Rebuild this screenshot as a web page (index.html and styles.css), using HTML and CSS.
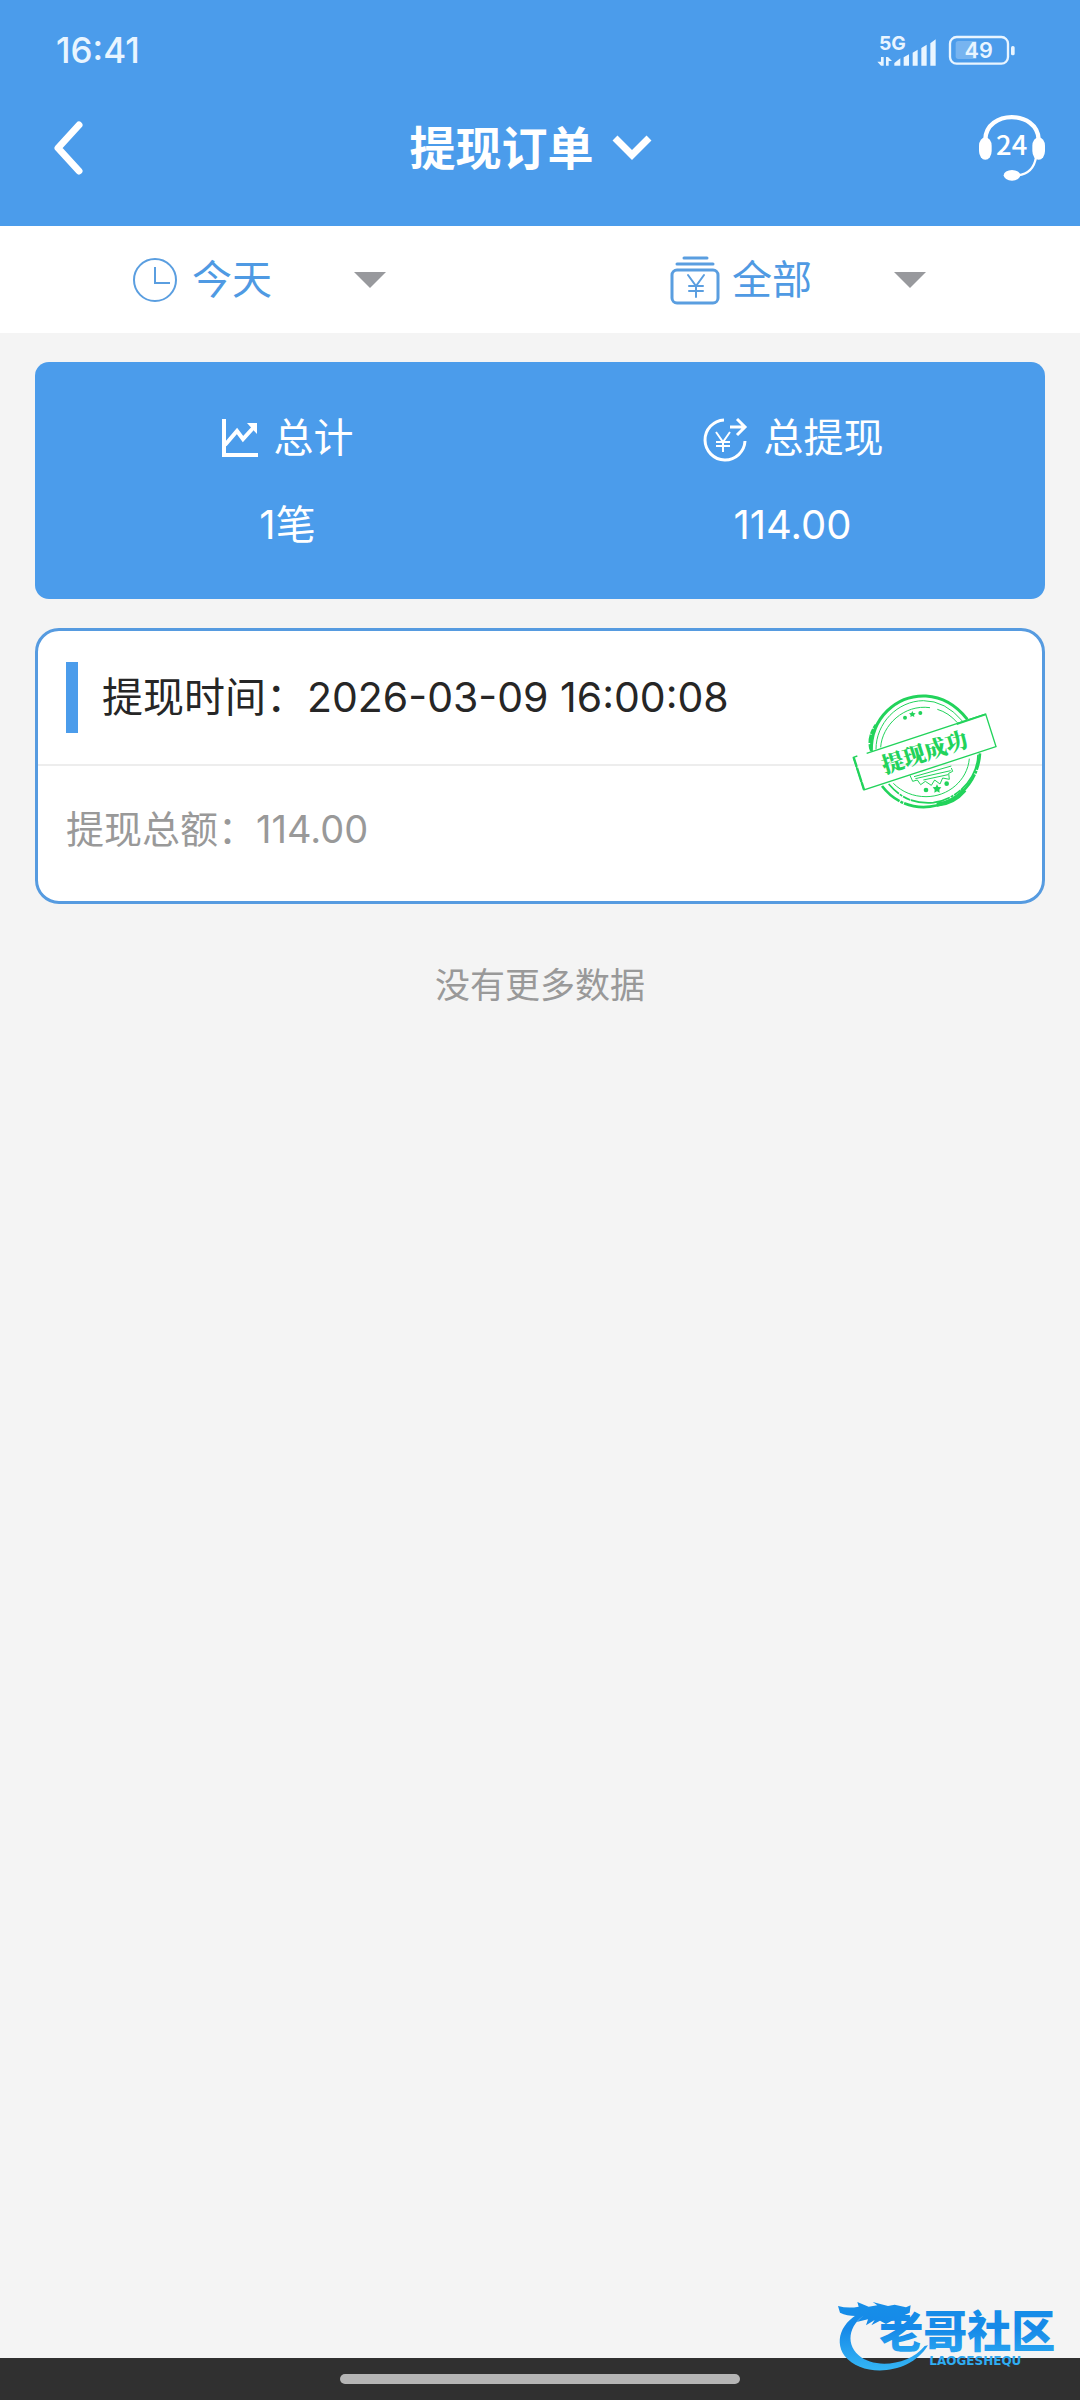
FILE: index.html
```html
<!DOCTYPE html>
<html lang="zh-CN">
<head>
<meta charset="utf-8">
<meta name="viewport" content="width=device-width, initial-scale=1">
<title>提现订单</title>
<link rel="stylesheet" href="styles.css">
</head>
<body>
<header class="header">
  <div class="status">
    <time class="status-time">16:41</time>
    <div class="status-icons">
      <svg class="signal" viewBox="50 17 186 135" aria-label="5G">
        <text x="59" y="83" font-size="58" font-weight="700">5G</text>
        <path d="M65 104h8v26h-8l-11-12h11zM80 130v-26h6l12 12h-10v14zM105 130v-8l18-14v22zM133 130v-25l16-9v34zM160 130V91l15-9v48zM186 130V77l16-10v63zM213 130V63l16-12v79z"/>
      </svg>
      <svg class="battery" viewBox="265 42 204 93" aria-label="电量 49">
        <rect x="271" y="48" width="174" height="80" rx="20" fill="none" stroke="#e9f5ff" stroke-width="7"/>
        <path d="M296 60h54v54h-54q-8 0-8-8V68q0-8 8-8z" opacity=".28"/>
        <rect x="454" y="75" width="11" height="28" rx="5"/>
        <text x="357" y="112" font-size="65" font-weight="600" text-anchor="middle">49</text>
      </svg>
    </div>
  </div>
  <div class="titlebar">
    <button class="icon-button back" type="button" aria-label="返回">
      <svg class="back-icon" viewBox="0 0 32 56"><path d="M28 5 7 28l21 23" fill="none" stroke="#fff" stroke-width="7" stroke-linecap="round" stroke-linejoin="round"/></svg>
    </button>
    <h1 class="title">
      <button class="title-button" type="button">提现订单
        <svg class="title-arrow" viewBox="0 0 40 30"><path d="m3 8 17 17L37 8" fill="none" stroke="#fff" stroke-width="7"/></svg>
      </button>
    </h1>
    <button class="icon-button" type="button" aria-label="客服">
      <svg class="service-icon" viewBox="355 280 204 204">
        <path d="M377 356C379 267 533 267 537 356" fill="none" stroke="#fff" stroke-width="13"/>
        <path d="M529 410q-8 48-54 54" fill="none" stroke="#fff" stroke-width="7"/>
        <rect x="358" y="350" width="38" height="67" rx="19" ry="26"/>
        <rect x="518" y="350" width="38" height="67" rx="19" ry="26"/>
        <ellipse cx="457" cy="464" rx="25" ry="16"/>
        <text x="456" y="403" font-size="82" font-weight="500" text-anchor="middle" class="service-text">24</text>
      </svg>
    </button>
  </div>
</header>

<form class="filters">
  <label class="filter">
    <svg class="filter-icon" viewBox="0 0 50 50"><g fill="none" stroke="#5a9ee0" stroke-width="2"><circle cx="25" cy="25" r="21"/><path d="M25 12v16h15"/></g></svg>
    <select class="filter-select" aria-label="时间"><option>今天</option></select>
    <svg class="filter-arrow" viewBox="0 0 32 16"><path d="M0 0h32L16 16z"/></svg>
  </label>
  <label class="filter">
    <svg class="filter-icon" viewBox="0 0 50 50"><g fill="none" stroke="#5a9ee0" stroke-width="3" stroke-linecap="round"><rect x="2" y="15" width="46" height="33" rx="5"/><path d="M7 9h36M14 3h23"/><path d="m18 20 8 11 8-11M26 31v11M19 31h14M19 36h14" stroke-width="2"/></g></svg>
    <select class="filter-select" aria-label="类型"><option>全部</option></select>
    <svg class="filter-arrow" viewBox="0 0 32 16"><path d="M0 0h32L16 16z"/></svg>
  </label>
</form>

<main class="content">
  <dl class="summary">
    <div class="summary-item">
      <dt class="summary-label">
        <svg class="chart-icon" viewBox="0 0 36 40"><path d="M2 1v36h34" fill="none" stroke="#fff" stroke-width="4"/><path d="m3 27 12-14 6 8 11-12" fill="none" stroke="#fff" stroke-width="4"/><path d="M25 5h10v11z" fill="#fff"/></svg>
        总计
      </dt>
      <dd class="summary-value">1笔</dd>
    </div>
    <div class="summary-item">
      <dt class="summary-label">
        <svg class="yen-icon" viewBox="0 0 46 48"><g fill="none" stroke="#fff" stroke-width="2"><path d="M22 6a20 20 0 1 0 21 21" stroke-width="3"/><path d="M28 13h15M35 5l8 8-8 8" stroke-width="3"/><path d="m14 18 7 10 7-10M21 28v10M14 28h14M14 32h14"/></g></svg>
        总提现
      </dt>
      <dd class="summary-value">114.00</dd>
    </div>
  </dl>

  <article class="order">
    <h2 class="order-head">提现时间：2026-03-09 16:00:08</h2>
    <p class="order-body">提现总额：114.00</p>
    <svg class="stamp" viewBox="0 0 510 420" aria-label="提现成功">
      <g fill="none" stroke="#22d35b">
        <path d="M94 214C92 114 170 44 258 48q72 4 124 70" stroke-width="9"/>
        <path d="M108 208C108 130 172 63 250 62q66 0 118 62" stroke-width="3"/>
        <path d="M92 208c-6-24-2-48 16-74" stroke-width="8" stroke-dasharray="16 3 26 2"/>
        <path d="M122 202c4-66 70-130 148-119M292 88q34 10 60 40" stroke-width="3"/>
        <path d="M126 318c38 50 92 68 144 62 80-10 144-72 150-160" stroke-width="8" stroke-dasharray="70 3 9 3 180 2"/>
        <path d="M414 224c-2 68-58 134-134 144-56 4-96-12-134-56" stroke-width="5" stroke-dasharray="120 2 24 3 9 3"/>
        <path d="M290 374q50-4 84-44" stroke-width="13"/>
        <path d="M388 236c-6 66-64 114-130 114-38 0-72-14-98-40" stroke-width="3"/>
        <path d="M52 228 40 232l32 98 396-130-31-98L80 220" stroke-width="4"/>
        <path d="m41 232 31 97" stroke-width="7" stroke-dasharray="30 3 44 2"/>
        <path d="m350 132 87-29" stroke-width="6"/>
        <path d="m210 286 8 18 14-4 10 14 14-10 18 12 10-16 16 12 8-18 20 4-2-18 12-6-4-10M222 290l112-32M226 296l106-24M250 300l74-16" stroke-width="3"/>
      </g>
      <g fill="#22d35b">
        <circle cx="195" cy="113" r="6"/><path d="m217 93 3 6 7 1-5 5 1 6-6-3-6 3 1-6-5-5 7-1z"/><circle cx="241" cy="99" r="6"/>
        <circle cx="258" cy="330" r="7"/><path d="m291 313 4 8 9 1-6 7 1 9-8-4-8 4 1-9-6-7 9-1z"/><circle cx="320" cy="311" r="7"/>
        <text class="stamp-text" x="254" y="241" font-size="67" text-anchor="middle" transform="rotate(-18 254 217)">提现成功</text>
      </g>
    </svg>
  </article>

  <p class="no-more">没有更多数据</p>
</main>

<footer class="gesture"><span class="gesture-bar"></span></footer>

<svg class="watermark" viewBox="0 0 780 360" aria-label="老哥社区">
  <defs>
    <linearGradient id="wm" x1="0" y1="60" x2="0" y2="275" gradientUnits="userSpaceOnUse"><stop offset="0" stop-color="#168fe8"/><stop offset=".4" stop-color="#1689e8"/><stop offset="1" stop-color="#35b7f5"/></linearGradient>
  </defs>
  <g fill="url(#wm)">
    <path d="M150 88C70 110 38 178 74 228c52 66 196 58 250-32l-10 2c-46 58-152 70-198 28C72 186 90 124 150 96z"/>
    <path d="M54 78q30 8 62 2l-4-14 34 14 26-4-14-10 46 12 20-4 34 8 14-6-3 22-27 12 27-1-9 15-36-6-26 14-18-10-26 14 10-16-26 16 6-18-34 8 20-20q-40 6-70-8z"/>
    <text class="watermark-name" x="178" y="204" font-size="132">老哥社区</text>
    <text class="watermark-sub" x="328" y="256" font-size="36">LAOGESHEQU</text>
  </g>
</svg>
</body>
</html>
```

FILE: styles.css
```css
* {
  box-sizing: border-box;
}

body {
  position: relative;
  display: flex;
  flex-direction: column;
  min-height: 100vh;
  margin: 0;
  background: #f4f4f4;
  color: #262626;
  font-family: Inter, "Noto Sans CJK SC", sans-serif;
  font-size: 40px;
}

h1, h2, p, dl, dt, dd {
  margin: 0;
  font-weight: 400;
}

button, select {
  padding: 0;
  border: 0;
  background: none;
  color: inherit;
  font: inherit;
}

svg {
  display: block;
  flex: none;
}

.header {
  padding-bottom: 30px;
  background: #4b9ceb;
  color: #fff;
}

.status {
  display: flex;
  align-items: center;
  justify-content: space-between;
  height: 100px;
  padding: 0 64px 0 56px;
  color: #e9f5ff;
}

.status-time {
  font-size: 35px;
  font-weight: 500;
}

.status-icons {
  display: flex;
  align-items: center;
  gap: 10px;
  fill: #e9f5ff;
}

.signal {
  width: 62px;
  height: 45px;
}

.battery {
  width: 68px;
  height: 31px;
}

.titlebar {
  display: grid;
  grid-template-columns: 48px 1fr 68px;
  align-items: center;
  height: 96px;
  padding: 0 34px 0 35px;
}

.icon-button {
  display: flex;
  align-items: center;
  height: 96px;
}

.back {
  justify-content: flex-end;
}

.back-icon {
  width: 32px;
  height: 56px;
}

.service-icon {
  width: 68px;
  height: 68px;
  fill: #fff;
}

.service-text {
  font-family: "Noto Sans CJK SC", sans-serif;
}

.title {
  display: flex;
  justify-content: center;
}

.title-button {
  display: flex;
  align-items: center;
  gap: 18px;
  padding-bottom: 6px;
  font-family: "Noto Sans CJK SC", sans-serif;
  font-size: 46px;
  font-weight: 700;
  line-height: 60px;
}

.title-arrow {
  width: 40px;
  height: 30px;
}

.filters {
  display: grid;
  grid-template-columns: 1fr 1fr;
  height: 107px;
  background: #fff;
}

.filter {
  display: flex;
  align-items: center;
  justify-content: center;
  padding-right: 24px;
  color: #4f9ae3;
}

.filter-icon {
  width: 50px;
  height: 50px;
  margin-right: 12px;
}

.filter-select {
  width: 194px;
  height: 80px;
  appearance: none;
}

.filter-arrow {
  width: 32px;
  height: 16px;
  margin-left: -32px;
  fill: #98999d;
  pointer-events: none;
}

.content {
  flex: 1;
  padding: 29px 35px;
}

.summary {
  display: grid;
  grid-template-columns: 1fr 1fr;
  padding: 48px 0 46px;
  border-radius: 14px;
  background: #4b9ceb;
  color: #fff;
  line-height: 56px;
  text-align: center;
}

.summary-item {
  display: grid;
  gap: 31px;
}

.summary-label {
  display: flex;
  align-items: center;
  justify-content: center;
  gap: 16px;
}

.chart-icon {
  width: 36px;
  height: 40px;
}

.yen-icon {
  width: 46px;
  height: 48px;
}

.order {
  position: relative;
  margin-top: 29px;
  border: 3px solid #569be0;
  border-radius: 24px;
  background: #fff;
}

.order-head {
  display: flex;
  align-items: center;
  padding: 31px 28px;
  border-bottom: 2px solid #ededed;
  font-size: 41px;
  line-height: 71px;
}

.order-head::before {
  width: 12px;
  height: 71px;
  margin-right: 24px;
  background: #4b9ceb;
  content: "";
}

.order-body {
  padding: 36px 28px 45px;
  color: #999;
  font-size: 38px;
  line-height: 54px;
}

.stamp {
  position: absolute;
  top: 49px;
  right: 32px;
  width: 170px;
  height: 140px;
}

.stamp-text {
  font-family: "Noto Serif CJK SC", "Noto Sans CJK SC", serif;
  font-weight: 900;
}

.no-more {
  margin-top: 54px;
  color: #999;
  font-size: 35px;
  line-height: 54px;
  text-align: center;
}

.gesture {
  display: flex;
  justify-content: center;
  padding: 16px 0;
  background: #303030;
}

.gesture-bar {
  width: 37%;
  height: 10px;
  border-radius: 5px;
  background: #b5b5b5;
}

.watermark {
  position: absolute;
  right: 0;
  bottom: 0;
  width: 260px;
  height: 120px;
  pointer-events: none;
}

.watermark-name {
  font-family: "Noto Sans CJK SC", sans-serif;
  font-weight: 900;
}

.watermark-sub {
  font-family: "DejaVu Sans", sans-serif;
  font-weight: 700;
}
```
